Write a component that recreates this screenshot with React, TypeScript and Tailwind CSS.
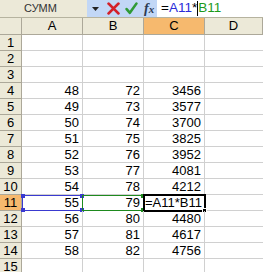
import React from "react";

const rows: [number, string, string, string][] = [
  [1, "", "", ""],
  [2, "", "", ""],
  [3, "", "", ""],
  [4, "48", "72", "3456"],
  [5, "49", "73", "3577"],
  [6, "50", "74", "3700"],
  [7, "51", "75", "3825"],
  [8, "52", "76", "3952"],
  [9, "53", "77", "4081"],
  [10, "54", "78", "4212"],
  [11, "55", "79", "=A11*B11"],
  [12, "56", "80", "4480"],
  [13, "57", "81", "4617"],
  [14, "58", "82", "4756"],
  [15, "", "", ""],
];

function Handle({ className }: { className: string }) {
  return <div className={`absolute w-[4px] h-[4px] ${className}`} />;
}

export default function App() {
  return (
    <div
      className="w-[263px] h-[272px] overflow-hidden bg-white text-black"
      style={{ fontFamily: '"Liberation Sans", Arial, sans-serif' }}
    >
      {/* formula bar */}
      <div className="flex h-[18px] border-b border-[#b6b39f]">
        <div className="w-[87px] bg-[#ece9d8] flex items-center justify-center pr-[6px] text-[11px] text-[#333]">
          СУММ
        </div>
        <div className="w-[70px] bg-[#c2d7f6] flex items-center">
          <svg width="7" height="4" viewBox="0 0 7 4" className="ml-[5px]">
            <path d="M0 0H7L3.5 4Z" fill="#222" />
          </svg>
          <svg width="13" height="13" viewBox="0 0 12 12" className="ml-[8px]">
            <path d="M1.5 1.5L10.5 10.5M10.5 1.5L1.5 10.5" stroke="#d3202a" strokeWidth="2.6" strokeLinecap="round" />
          </svg>
          <svg width="13" height="13" viewBox="0 0 12 12" className="ml-[5px]">
            <path d="M1.5 6.5L4.5 10L10.5 1.5" stroke="#2f9a36" strokeWidth="2.4" fill="none" strokeLinecap="round" strokeLinejoin="round" />
          </svg>
          <span
            className="ml-[6px] text-[14px] italic font-bold text-[#2c3a52] leading-none"
            style={{ fontFamily: '"Liberation Serif", "Times New Roman", serif' }}
          >
            f<span className="text-[11px]">x</span>
          </span>
        </div>
        <div className="flex-1 bg-white flex items-center pl-[4px] text-[13.5px]">
          <span>=</span>
          <span className="text-[#2b2bd8]">A11</span>
          <span>*</span>
          <span className="w-[1px] h-[15px] bg-black" />
          <span className="text-[#1c9a1c]">B11</span>
        </div>
      </div>

      {/* grid */}
      <div className="grid grid-cols-[22px_61px_61px_61px_1fr] text-[13px]">
        {/* header */}
        <div className="h-[17px] bg-[#ece9d8] border-r border-b border-[#aca899]" />
        {["A", "B", "C", "D"].map((c) => (
          <div
            key={c}
            className={`h-[17px] flex items-center justify-center border-r border-b border-[#aca899] ${
              c === "C" ? "bg-[#f6b96e]" : "bg-[#ece9d8]"
            }`}
          >
            {c}
          </div>
        ))}

        {rows.map(([n, a, b, c]) => {
          const active = n === 11;
          return (
            <React.Fragment key={n}>
              <div
                className={`h-[16px] flex items-center justify-center pt-[1px] border-r border-b border-[#aca899] ${
                  active ? "bg-[#f6b96e]" : "bg-[#ece9d8]"
                }`}
              >
                {n}
              </div>
              <div className="relative h-[16px] flex items-center justify-end pr-[3px] pt-[1px] border-r border-b border-[#d0d0d0]">
                {a}
                {active && (
                  <div className="absolute left-0 top-0 w-[61px] h-[16px] border border-[#3a3ad0]">
                    <Handle className="-left-[2px] -top-[2px] bg-[#3a3ad0]" />
                    <Handle className="-right-[2px] -top-[2px] bg-[#3a3ad0]" />
                    <Handle className="-left-[2px] -bottom-[2px] bg-[#3a3ad0]" />
                    <Handle className="-right-[2px] -bottom-[2px] bg-[#3a3ad0]" />
                  </div>
                )}
              </div>
              <div className="relative h-[16px] flex items-center justify-end pr-[3px] pt-[1px] border-r border-b border-[#d0d0d0]">
                {b}
                {active && (
                  <div className="absolute -left-[1px] top-0 w-[62px] h-[16px] border border-[#1e8a1e]">
                    <Handle className="-right-[2px] -top-[2px] bg-[#1e8a1e]" />
                    <Handle className="-right-[2px] -bottom-[2px] bg-[#1e8a1e]" />
                  </div>
                )}
              </div>
              <div
                className={`relative h-[16px] flex items-center pt-[1px] border-r border-b border-[#d0d0d0] ${
                  active ? "justify-start pl-[1px]" : "justify-end pr-[3px]"
                }`}
              >
                {c}
                {active && (
                  <div className="absolute -left-[1px] -top-[1px] w-[63px] h-[18px] border-2 border-black">
                    <div className="absolute -right-[3px] -bottom-[3px] w-[5px] h-[5px] bg-black border border-white" />
                  </div>
                )}
              </div>
              <div className="h-[16px] border-b border-[#d0d0d0]" />
            </React.Fragment>
          );
        })}
      </div>
    </div>
  );
}
